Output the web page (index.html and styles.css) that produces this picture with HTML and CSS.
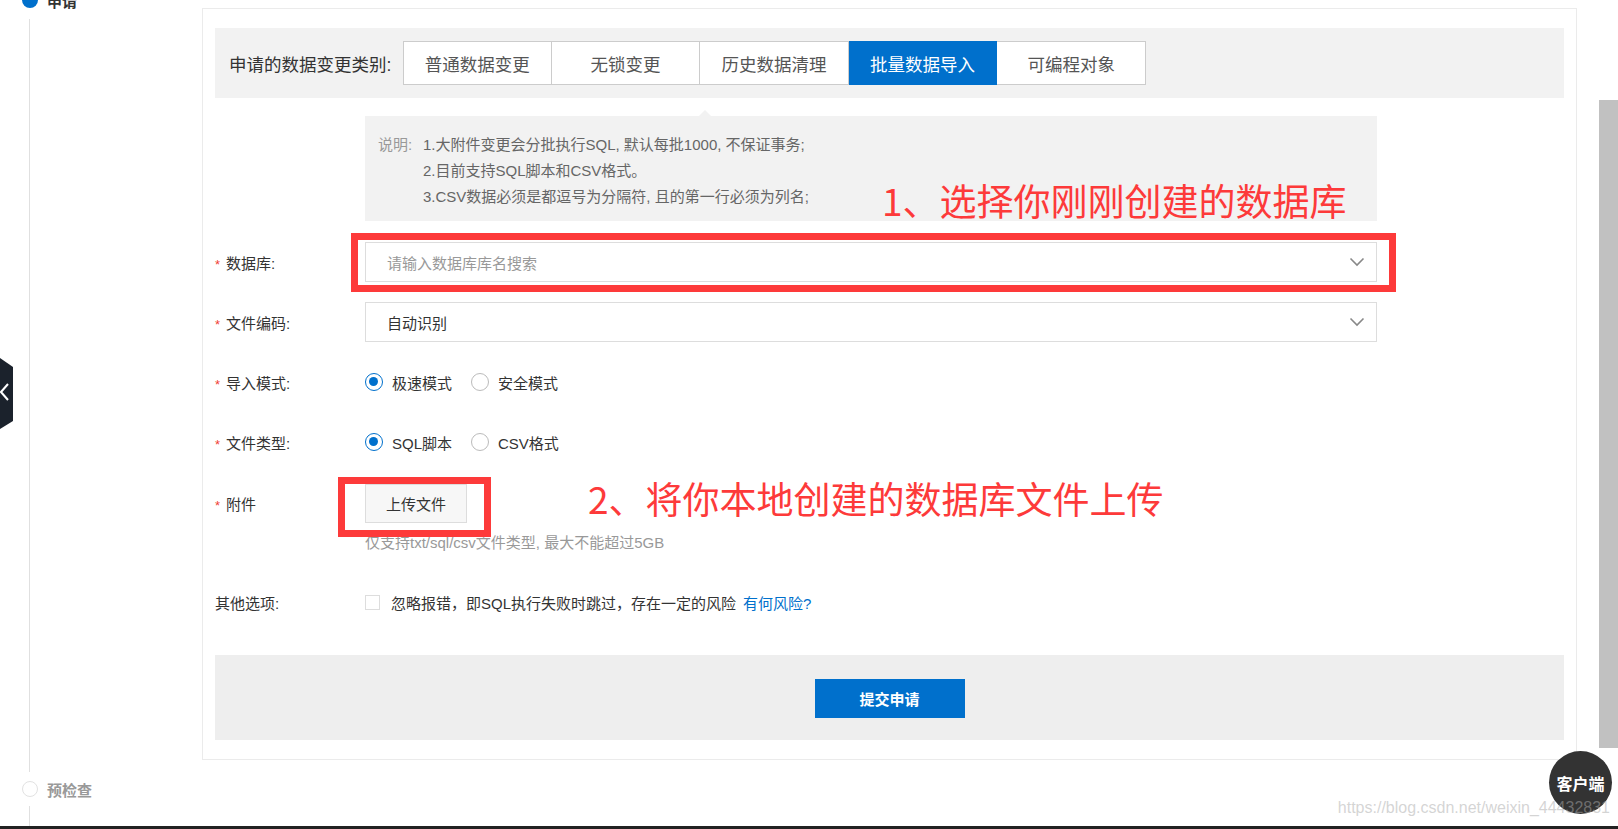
FILE: index.html
```html
<!DOCTYPE html>
<html lang="zh-CN">
<head>
<meta charset="utf-8">
<title>数据变更</title>
<link rel="stylesheet" href="styles.css">
</head>
<body>
<div class="page">
  <aside class="steps">
    <div class="step step-active"><span class="step-dot"></span><span class="step-name">申请</span></div>
    <div class="step-line step-line-main"></div>
    <div class="step step-todo"><span class="step-dot"></span><span class="step-name">预检查</span></div>
    <div class="step-line step-line-tail"></div>
  </aside>

  <main class="card">
    <div class="type-bar">
      <span class="type-label">申请的数据变更类别:</span>
      <div class="tabs">
        <span class="tab">普通数据变更</span>
        <span class="tab">无锁变更</span>
        <span class="tab">历史数据清理</span>
        <span class="tab tab-active">批量数据导入</span>
        <span class="tab">可编程对象</span>
      </div>
    </div>

    <div class="desc-row">
      <div class="desc">
        <div class="desc-line"><span class="desc-key">说明:</span><span>1.大附件变更会分批执行SQL, 默认每批1000, 不保证事务;</span></div>
        <div class="desc-line"><span class="desc-key"></span><span>2.目前支持SQL脚本和CSV格式。</span></div>
        <div class="desc-line"><span class="desc-key"></span><span>3.CSV数据必须是都逗号为分隔符, 且的第一行必须为列名;</span></div>
      </div>
      <div class="annot annot-1">1、选择你刚刚创建的数据库</div>
    </div>

    <div class="form-row row-db">
      <span class="form-label"><i class="req">*</i>数据库:</span>
      <div class="control">
        <div class="select select-placeholder">
          <span>请输入数据库库名搜索</span>
          <svg class="chev" width="16" height="10" viewBox="0 0 16 10"><polyline points="1.5,1.5 8,8 14.5,1.5" fill="none" stroke="#888" stroke-width="1.6"/></svg>
        </div>
        <span class="redbox redbox-db"></span>
      </div>
    </div>

    <div class="form-row row-gap">
      <span class="form-label"><i class="req">*</i>文件编码:</span>
      <div class="control">
        <div class="select">
          <span>自动识别</span>
          <svg class="chev" width="16" height="10" viewBox="0 0 16 10"><polyline points="1.5,1.5 8,8 14.5,1.5" fill="none" stroke="#888" stroke-width="1.6"/></svg>
        </div>
      </div>
    </div>

    <div class="form-row row-gap">
      <span class="form-label"><i class="req">*</i>导入模式:</span>
      <div class="control radios">
        <span class="radio-opt"><span class="radio radio-on"></span>极速模式</span>
        <span class="radio-opt"><span class="radio"></span>安全模式</span>
      </div>
    </div>

    <div class="form-row row-gap">
      <span class="form-label"><i class="req">*</i>文件类型:</span>
      <div class="control radios">
        <span class="radio-opt"><span class="radio radio-on"></span>SQL脚本</span>
        <span class="radio-opt"><span class="radio"></span>CSV格式</span>
      </div>
    </div>

    <div class="form-row row-attach">
      <span class="form-label"><i class="req">*</i>附件</span>
      <div class="control control-upload">
        <span class="upload-btn">上传文件</span>
        <span class="redbox redbox-upload"></span>
        <div class="annot annot-2">2、将你本地创建的数据库文件上传</div>
      </div>
    </div>
    <div class="hint">仅支持txt/sql/csv文件类型, 最大不能超过5GB</div>

    <div class="form-row row-other">
      <span class="form-label">其他选项:</span>
      <div class="control check-line">
        <span class="checkbox"></span>
        <span>忽略报错，即SQL执行失败时跳过，存在一定的风险</span>
        <span class="link">有何风险?</span>
      </div>
    </div>

    <div class="footer">
      <span class="submit">提交申请</span>
    </div>
  </main>

  <div class="scrollbar"><div class="thumb"></div></div>
</div>
<div class="bottom-bar"></div>

<svg class="side-tab" width="14" height="72" viewBox="0 0 14 72"><polygon points="0,0 13,9 13,63 0,71" fill="#1b222c"/><polyline points="8,26 1,34 8,42" fill="none" stroke="#fff" stroke-width="2"/></svg>
<div class="service">客户端</div>
<div class="watermark">https://blog.csdn.net/weixin_44432831</div>
</body>
</html>
```

FILE: styles.css
```css
* { box-sizing: border-box; margin: 0; padding: 0; }
html, body { width: 1618px; height: 829px; overflow: hidden; background: #fff; }
body {
  position: relative;
  font-family: "Liberation Sans", "Noto Sans CJK SC", sans-serif;
  font-size: 15px;
  color: #333;
}

.page { display: flex; height: 826px; }

/* steps timeline */
.steps { width: 202px; flex: none; display: flex; flex-direction: column; padding-left: 22px; }
.step { display: flex; align-items: center; height: 20px; gap: 9px; font-size: 15px; font-weight: bold; flex: none; }
.step-dot { width: 16px; height: 16px; border-radius: 50%; flex: none; }
.step-active { margin-top: -10px; color: #333; }
.step-active .step-dot { background: #0070cc; }
.step-todo { margin-top: 7px; color: #999; }
.step-todo .step-dot { border: 1px solid #e2e2e2; background: #fff; }
.step-line { width: 1px; background: #e0e0e0; margin-left: 7px; }
.step-line-main { flex: 1; margin-top: 9px; }
.step-line-tail { height: 20px; margin-top: 7px; flex: none; }

/* card */
.card {
  width: 1375px; height: 752px; margin-top: 8px; flex: none;
  border: 1px solid #ebebeb;
  padding: 19px 12px;
  display: flex; flex-direction: column;
}

.type-bar { height: 70px; background: #f2f2f2; display: flex; align-items: center; padding-left: 14px; flex: none; }
.type-label { width: 174px; font-size: 17.5px; color: #333; white-space: nowrap; }
.tabs { display: flex; height: 44px; }
.tab {
  width: 148.6px; height: 44px; display: flex; align-items: center; justify-content: center;
  border: 1px solid #cccccc; border-left: none; background: #fff;
  font-size: 17.5px; color: #555;
}
.tab:first-child { border-left: 1px solid #cccccc; }
.tab-active { background: #0070cc; border-color: #0070cc; color: #fff; }

/* description */
.desc-row { position: relative; margin-top: 18px; padding-left: 150px; flex: none; }
.desc { position: relative; width: 1012px; height: 105px; background: #f2f2f2; padding: 14px 13px 0; }
.desc::before {
  content: ""; position: absolute; left: 334px; top: -6px;
  border-left: 6px solid transparent; border-right: 6px solid transparent; border-bottom: 6px solid #f2f2f2;
}
.desc-line { display: flex; height: 26px; align-items: center; font-size: 15px; color: #666; white-space: nowrap; }
.desc-key { width: 45px; color: #999; flex: none; }

.annot {
  position: absolute; color: #fd3a3a; font-family: "Noto Sans CJK SC", sans-serif;
  font-size: 37px; line-height: 44px; white-space: nowrap;
}
.annot-1 { left: 667px; top: 62px; }
.annot-2 { left: 223px; top: -8px; }

/* form rows */
.form-row { display: flex; align-items: center; flex: none; }
.row-db { margin-top: 21px; height: 40px; }
.row-gap { margin-top: 20px; height: 40px; }
.row-attach { margin-top: 22px; height: 39px; }
.row-other { margin-top: 40px; height: 20px; }
.form-label { width: 150px; flex: none; font-size: 15px; color: #333; white-space: nowrap; }
.req { font-style: normal; color: #f04134; font-size: 13px; margin-right: 6px; }
.control { position: relative; display: flex; align-items: center; }

.select {
  width: 1012px; height: 40px; border: 1px solid #dddddd; background: #fff;
  display: flex; align-items: center; justify-content: space-between;
  padding: 0 11px 0 21px; font-size: 15px; color: #333;
}
.select-placeholder { color: #999; }
.chev { display: block; }

.redbox { position: absolute; border: 7px solid #fd3a3a; pointer-events: none; }
.redbox-db { left: -14px; right: -19px; top: -9px; bottom: -10px; }
.redbox-upload { left: -27px; top: -7px; width: 153px; height: 60px; }

.radios { gap: 19px; }
.radio-opt { display: flex; align-items: center; gap: 9px; font-size: 15px; color: #333; }
.radio { width: 18px; height: 18px; border-radius: 50%; border: 1px solid #bbbbbb; background: #fff; flex: none; position: relative; }
.radio-on { border: 1.5px solid #0070cc; }
.radio-on::after {
  content: ""; position: absolute; left: 3px; top: 3px; width: 9px; height: 9px; border-radius: 50%; background: #0070cc;
}

.upload-btn {
  width: 102px; height: 39px; display: flex; align-items: center; justify-content: center;
  background: #f7f7f7; border: 1px solid #dddddd; font-size: 15px; color: #333;
}
.hint { margin-top: 11px; padding-left: 150px; font-size: 15px; line-height: 18px; color: #999; flex: none; }

.check-line { font-size: 15px; color: #333; white-space: nowrap; }
.checkbox { width: 15px; height: 15px; border: 1px solid #dddddd; background: #fff; margin-right: 11px; flex: none; }
.link { color: #0070cc; margin-left: 7px; }

.footer {
  margin-top: 43px; height: 85px; background: #eeeeee; flex: none;
  display: flex; justify-content: center; padding-top: 24px;
}
.submit {
  width: 150px; height: 39px; background: #0070cc; color: #fff; font-weight: bold; font-size: 15px;
  display: flex; align-items: center; justify-content: center;
}

/* scrollbar */
.scrollbar { width: 19px; margin-left: auto; flex: none; }
.thumb { margin-top: 100px; height: 648px; background: #c1c1c1; }

.bottom-bar { height: 3px; background: #222; }

/* overlays */
.side-tab { position: absolute; left: 0; top: 358px; display: block; }
.service {
  position: absolute; left: 1549px; top: 751px; width: 63px; height: 63px; border-radius: 50%;
  background: #333; color: #fff; font-size: 16px; font-weight: bold; font-family: "Noto Sans CJK SC", sans-serif;
  display: flex; align-items: center; justify-content: center;
}
.watermark {
  position: absolute; right: 8px; top: 798px; font-size: 16px; line-height: 20px;
  color: rgba(170, 170, 170, 0.5); white-space: nowrap;
}
```
